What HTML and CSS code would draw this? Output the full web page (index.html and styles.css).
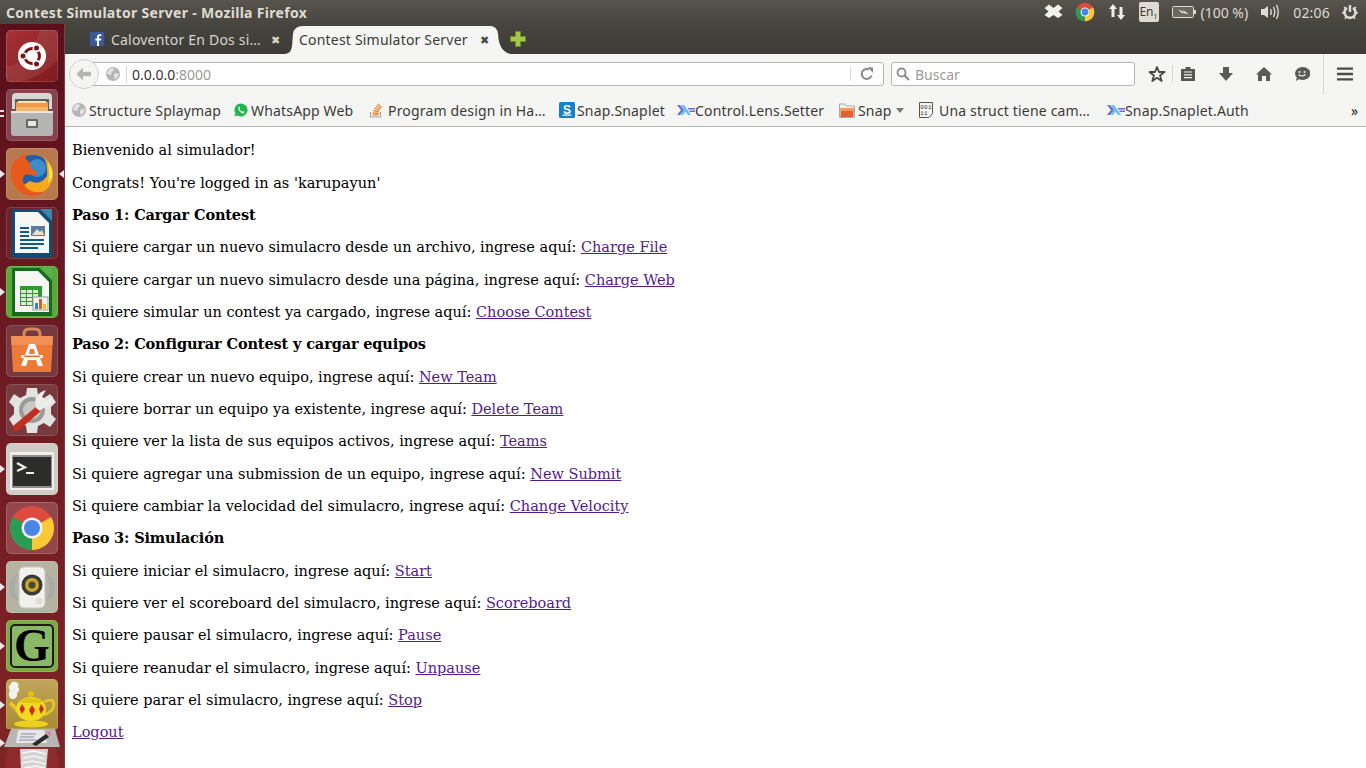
FILE: index.html
```html
<!DOCTYPE html>
<html>
<head>
<meta charset="utf-8" />
<title>Contest Simulator Server</title>
<link rel="stylesheet" href="styles.css">
</head>
<body>
<svg class="defs" width="0" height="0">
	<symbol id="chrome" viewBox="0 0 52 52">
		<circle cx="26" cy="26" r="22" fill="#dd4b3e"/>
		<path d="M26 26 L45.05 15 A22 22 0 0 1 26 48Z" fill="#fcc934"/>
		<path d="M26 26 L26 48 A22 22 0 0 1 6.95 15Z" fill="#2a9d55"/>
		<circle cx="26" cy="26" r="10.5" fill="#f4f4f4"/>
		<circle cx="26" cy="26" r="8" fill="#4a86e8"/>
	</symbol>
	<symbol id="globe" viewBox="0 0 16 16">
		<circle cx="8" cy="8" r="8" fill="#b5b5b5"/>
		<path d="M4 2 L8 1 L9 4 L6 6 L7 8 L4 9 L1 7Z M10 7 L15 7 L13 12 L10 14 L9 10Z" fill="#e4e4e4"/>
	</symbol>
	<symbol id="haskell" viewBox="0 0 18 12">
		<path d="M0 1H3L7 6L3 11H0L4 6Z" fill="#6f68d8"/>
		<path d="M4 1H7L14 11H11L8.5 7.5L6 11H3.5L7 6Z" fill="#5fc4e8"/>
		<path d="M11 4H18V5.5H11ZM12.5 6.5H18V8H12.5Z" fill="#6f68d8"/>
	</symbol>
</svg>

<header class="panel">
	<span class="panel-title">Contest Simulator Server - Mozilla Firefox</span>
	<div class="tray">
		<svg class="tray-dropbox" width="19" height="16" viewBox="0 0 19 16"><path d="M5 0.500L9.500 4L14 0.500L18.500 4L14.500 7.500L18.500 11L14 14L9.500 11L5 14L0.500 11L4.500 7.500L0.500 4Z" fill="#f2f1ed"/></svg>
		<svg class="tray-chrome" width="22" height="22"><use href="#chrome"/></svg>
		<svg class="tray-net" width="18" height="16" viewBox="0 0 18 16"><path d="M5 0L9 5H6.500V13H3.500V5H1ZM13 16L9 11H11.500V3H14.500V11H17Z" fill="#eeede8"/></svg>
		<span class="tray-lang">En<sub>1</sub></span>
		<svg class="tray-batt" width="24" height="12" viewBox="0 0 24 12"><rect x="0.500" y="0.500" width="21" height="11" rx="1" fill="#6a6960" stroke="#dfdbd2"/><rect x="22" y="4" width="2" height="4" fill="#dfdbd2"/><path d="M6 3.500L12 6L11 4L17 8.500L10 6.500L11 8Z" fill="#eeede8"/></svg>
		<span class="tray-pct">(100 %)</span>
		<svg class="tray-vol" width="21" height="16" viewBox="0 0 21 16"><path d="M1 5H4L8 2V14L4 11H1Z" fill="#dfdbd2"/><path d="M10.500 5Q12 8 10.500 11M13.500 3Q16 8 13.500 13M16.500 1Q20 8 16.500 15" fill="none" stroke="#dfdbd2" stroke-width="1.400"/></svg>
		<span class="tray-clock">02:06</span>
		<svg class="tray-power" width="16" height="16" viewBox="0 0 16 16"><path d="M5 3.800A5.500 5.500 0 1 0 11 3.800" fill="none" stroke="#dfdbd2" stroke-width="2.600"/><rect x="6.800" y="1" width="2.400" height="7" fill="#dfdbd2"/><path d="M2 3L3.500 4.500M14 3L12.500 4.500M0 9H2M16 9H14M3 15L4 13M13 15L12 13" stroke="#dfdbd2" stroke-width="1.500"/></svg>
	</div>
</header>

<div class="desktop">
	<nav class="launcher">
		<div class="tile tile-ubuntu">
			<svg width="52" height="52" viewBox="0 0 52 52">
				<path d="M0 36Q22 36 34 0H52V30Q30 52 6 52H0Z" fill="#fff" opacity=".08"/>
				<circle cx="26" cy="26" r="14" fill="#fff"/>
				<circle cx="26" cy="26" r="7.500" fill="none" stroke="#7d1416" stroke-width="3"/>
				<g fill="#fff"><circle cx="18" cy="26" r="3.500"/><circle cx="30" cy="19" r="3.500"/><circle cx="30" cy="33" r="3.500"/></g>
				<g fill="#7d1416"><circle cx="17" cy="26" r="2.500"/><circle cx="30.500" cy="18" r="2.500"/><circle cx="30.500" cy="34" r="2.500"/></g>
			</svg>
		</div>
		<div class="tile tile-files">
			<i class="pip pip-double"></i>
			<svg width="52" height="52" viewBox="0 0 52 52">
				<path d="M6 8Q6 4 10 4H42Q46 4 46 8V20H6Z" fill="#d8d6d2"/>
				<rect x="9" y="10" width="34" height="12" fill="#5d5d5d"/>
				<rect x="10" y="13" width="32" height="5" fill="#f19a4a"/>
				<rect x="12" y="12" width="28" height="2" fill="#fbe3b8"/>
				<rect x="10" y="18" width="32" height="5" fill="#f4b66c"/>
				<path d="M5 22H47V44Q47 47 44 47H8Q5 47 5 44Z" fill="#b4b4b2"/>
				<rect x="5" y="22" width="42" height="2" fill="#e8e8e6"/>
				<rect x="20" y="30" width="12" height="9" rx="1" fill="#666"/>
				<rect x="22" y="32" width="8" height="5" fill="#e6e6e6"/>
			</svg>
		</div>
		<div class="tile tile-firefox">
			<i class="pip"></i><i class="pip-right"></i>
			<svg width="52" height="52" viewBox="0 0 52 52">
				<circle cx="27" cy="25" r="18" fill="#1f5fa8"/>
				<circle cx="31" cy="20" r="9" fill="#3d8ccb"/>
				<path d="M38 9Q48 18 47 29Q44 44 29 47Q18 48 11 41L24 33Q34 38 41 28Q42 18 38 9Z" fill="#f6a81c"/>
				<path d="M42 14Q48 22 46 30L42 36Q44 24 42 14Z" fill="#fde34a"/>
				<path d="M20 6Q14 7 11 13L10 10Q4 18 5 28Q7 42 20 47Q31 50 39 43Q26 47 19 38Q14 30 20 26Q25 28 30 27Q33 24 28 22L24 20Q26 16 22 13Q18 11 20 6Z" fill="#e8591c"/>
			</svg>
		</div>
		<div class="tile tile-writer">
			<svg width="52" height="52" viewBox="0 0 52 52">
				<path d="M6 2H34L46 14V50H6Z" fill="#0e4f78"/>
				<path d="M34 2H46V14Z" fill="#3a86ad"/>
				<path d="M9 5H32L43 16V46H9Z" fill="#f6f6f4"/>
				<g fill="#0e5a88"><rect x="14" y="20" width="9" height="2"/><rect x="14" y="24" width="9" height="2"/><rect x="14" y="28" width="9" height="2"/><rect x="14" y="32" width="24" height="2"/><rect x="14" y="36" width="24" height="2"/><rect x="14" y="40" width="18" height="2"/></g>
				<rect x="25" y="19" width="14" height="10" fill="#5a7c9a"/>
				<path d="M26 28L31 22L34 25L36 23L38 28Z" fill="#e8e4cc"/>
			</svg>
		</div>
		<div class="tile tile-calc">
			<i class="pip"></i>
			<svg width="52" height="52" viewBox="0 0 52 52">
				<path d="M6 2H34L46 14V50H6Z" fill="#136b1b"/>
				<path d="M34 2H46V14Z" fill="#5cb04a"/>
				<path d="M9 5H32L43 16V46H9Z" fill="#f6f6f4"/>
				<rect x="14" y="20" width="22" height="20" fill="#2c9d2c"/>
				<g fill="#d8efd0"><rect x="15" y="24" width="5" height="3"/><rect x="21" y="24" width="5" height="3"/><rect x="27" y="24" width="5" height="3"/><rect x="15" y="28" width="5" height="3"/><rect x="21" y="28" width="5" height="3"/><rect x="27" y="28" width="5" height="3"/><rect x="15" y="32" width="5" height="3"/><rect x="21" y="32" width="5" height="3"/><rect x="27" y="32" width="5" height="3"/><rect x="15" y="36" width="5" height="3"/><rect x="21" y="36" width="5" height="3"/></g>
				<rect x="27" y="31" width="15" height="13" fill="#f2f2f2" stroke="#9a9a9a"/>
				<rect x="29" y="37" width="3" height="6" fill="#2a8bd0"/><rect x="33" y="33" width="3" height="10" fill="#e0592a"/><rect x="37" y="38" width="3" height="5" fill="#f0c020"/>
			</svg>
		</div>
		<div class="tile tile-software">
			<svg width="52" height="52" viewBox="0 0 52 52">
				<path d="M18 14V9Q18 4 23 4H29Q34 4 34 9V14" fill="none" stroke="#d98a5c" stroke-width="3"/>
				<path d="M5 11H47L45 47H7Z" fill="#ee7a38"/>
				<path d="M5 11H47L46.500 20H5.500Z" fill="#f29056"/>
				<path d="M23 19H29L37 41H32L30 35H22L20 41H15ZM24 24L23 29H29L28 24Z" fill="#fff"/>
				<rect x="15" y="30" width="22" height="3" fill="#fff"/>
				<rect x="18" y="30.500" width="16" height="1.500" fill="#e8703a"/>
			</svg>
		</div>
		<div class="tile tile-settings">
			<svg width="52" height="52" viewBox="0 0 52 52">
				<path d="M21 4H31L32 11L38 14L44 10L50 18L45 23V30L50 35L44 43L38 39L32 42L31 49H21L20 42L14 39L8 43L3 35L8 30V23L3 18L8 10L14 14L20 11Z" fill="#e2e2e0"/>
				<circle cx="26" cy="26" r="13" fill="#9a9a98"/>
				<circle cx="26" cy="26" r="9" fill="#c8c8c6"/>
				<path d="M7 42L31 22L35 27L12 47Q6 48 7 42Z" fill="#c22f22"/>
				<path d="M30 24Q27 13 35 8L40 6L36 13L40 17L47 12Q47 22 38 24Q35 25 34 27Z" fill="#ececea"/>
			</svg>
		</div>
		<div class="tile tile-terminal">
			<i class="pip"></i>
			<svg width="52" height="52" viewBox="0 0 52 52">
				<rect x="4" y="9" width="44" height="38" fill="#f0efec"/>
				<rect x="6" y="12" width="40" height="33" fill="#8f8f8b"/>
				<rect x="7" y="14" width="38" height="29" fill="#2c2c2a"/>
				<path d="M11 20L19 24.500L11 28" fill="none" stroke="#f2f2f2" stroke-width="2.200"/>
				<rect x="20" y="29" width="8" height="2" fill="#f2f2f2"/>
			</svg>
		</div>
		<div class="tile tile-chrome">
			<svg width="52" height="52"><use href="#chrome"/></svg>
		</div>
		<div class="tile tile-speaker">
			<i class="pip"></i>
			<svg width="52" height="52" viewBox="0 0 52 52">
				<path d="M11 13Q3 26 11 39M7 16Q1 26 7 36M41 13Q49 26 41 39M45 16Q51 26 45 36" fill="none" stroke="#9aa6ae" stroke-width="1.200"/>
				<rect x="13" y="6" width="26" height="41" rx="5" fill="#f1f0ec" stroke="#c8c7c2"/>
				<circle cx="26" cy="24" r="10.500" fill="#3c3a34"/>
				<circle cx="26" cy="24" r="7" fill="#c9a52a"/>
				<circle cx="26" cy="24" r="3.500" fill="#4a4636"/>
				<circle cx="33" cy="40" r="3.500" fill="#dddcd6"/>
			</svg>
		</div>
		<div class="tile tile-g">
			<i class="pip"></i>
			<div class="g-face">G</div>
		</div>
		<div class="tile tile-teapot">
			<i class="pip"></i>
			<svg width="52" height="50" viewBox="0 0 52 50">
				<path d="M5 20Q1 15 4 12Q1 7 5 5Q5 2 10 3Q14 5 12 8Q15 11 11 14Q12 18 8 20Z" fill="#f2f2ee"/>
				<path d="M4 24Q9 28 12 32" fill="none" stroke="#e8c820" stroke-width="4"/>
				<path d="M38 23Q47 18 48 25Q48 32 38 36" fill="none" stroke="#e8c820" stroke-width="2.500"/>
				<ellipse cx="25" cy="30" rx="15" ry="12" fill="#f2da20"/>
				<path d="M14 22Q25 16 36 22L34 24H16Z" fill="#e0c014"/>
				<circle cx="25" cy="15" r="3" fill="#e0c014"/>
				<ellipse cx="25" cy="45" rx="17" ry="3.500" fill="#ecd020"/>
				<g fill="#d42a1c"><path d="M16 25L19 30L16 35L13.500 30Z"/><path d="M26 26L29 31L26 37L23 31Z"/><path d="M35 25L38 30L35 35L33 30Z"/></g>
			</svg>
		</div>
		<div class="tile tile-scanner">
			<i class="pip"></i>
			<svg width="56" height="42" viewBox="0 0 56 42">
				<path d="M7 0H51L56 18H0Z" fill="#b9b5b2"/>
				<path d="M14 1H40L43 14H12Z" fill="#e6e6ea"/>
				<path d="M17 5H32M16 8H30M15 11H33" stroke="#8a8aa0"/>
				<path d="M28 15L42 5L45 8L32 17Z" fill="#2a2a2a"/>
				<path d="M42 4L47 2L46 7Z" fill="#d87ab0"/>
				<path d="M4 18H52L55 42H1Z" fill="#8f2a2e"/>
				<path d="M16 20H44L42 42H17Z" fill="#d6d4d2"/>
				<path d="M18 24L30 22L42 25M19 29L30 27L40 30M18 34L28 32L42 35M20 39L32 37L41 39" fill="none" stroke="#f6f6f6" stroke-width="1.500"/>
			</svg>
		</div>
	</nav>

	<div class="browser">
		<div class="tabstrip">
			<div class="tab">
				<svg class="fav" width="16" height="16" viewBox="0 0 16 16"><rect width="14" height="14" y="1" x="1" fill="#3b5998"/><path d="M10 15V9.500H12L12.300 7.500H10V6Q10 5 11 5H12.400V3.200H10.500Q8 3.200 8 6V7.500H6.300V9.500H8V15Z" fill="#fff"/></svg>
				<span class="tab-label">Caloventor En Dos si…</span>
				<span class="tab-close tab-close-dark">✖</span>
			</div>
			<div class="tab tab-active">
				<span class="tab-label">Contest Simulator Server</span>
				<span class="tab-close">✖</span>
			</div>
			<svg class="newtab" width="16" height="16" viewBox="0 0 16 16"><path d="M5.500 0.500H10.500V5.500H15.500V10.500H10.500V15.500H5.500V10.500H0.500V5.500H5.500Z" fill="#a3c94a" stroke="#6d8f2a"/></svg>
		</div>

		<div class="navbar">
			<div class="backbtn"><svg width="18" height="16" viewBox="0 0 18 16"><path d="M8 1.500L1.500 8L8 14.500V10.200H16V5.800H8Z" fill="#b6b6b4"/></svg></div>
			<div class="urlbar">
				<svg class="urlglobe" width="14" height="14"><use href="#globe"/></svg>
				<span class="urltext">0.0.0.0<span class="urlport">:8000</span></span>
				<svg class="reload" width="14" height="14" viewBox="0 0 14 14"><path d="M11.500 8.500A5 5 0 1 1 9 2.500" fill="none" stroke="#8a8a88" stroke-width="2"/><path d="M7.500 0L13 0.500V6Z" fill="#8a8a88"/></svg>
			</div>
			<div class="searchbar">
				<svg width="14" height="14" viewBox="0 0 14 14"><circle cx="5.500" cy="5.500" r="4" fill="none" stroke="#8a8a88" stroke-width="1.800"/><path d="M8.500 8.500L13 13" stroke="#8a8a88" stroke-width="2.200"/></svg>
				<span class="searchtext">Buscar</span>
			</div>
			<div class="navicons">
				<svg class="ni-star" width="18" height="18" viewBox="0 0 18 18"><path d="M9 2L11 7H16.500L12 10.500L13.700 16L9 12.800L4.300 16L6 10.500L1.500 7H7Z" fill="none" stroke="#4a4a48" stroke-width="1.800" stroke-linejoin="round"/></svg>
				<svg class="ni-clip" width="16" height="16" viewBox="0 0 16 16"><path d="M1 3H5.500V1H10.500V3H15V15H1Z" fill="#555"/><path d="M4 6H12M4 8.800H12M4 11.600H12" stroke="#f5f5f4" stroke-width="1.200"/></svg>
				<svg class="ni-down" width="16" height="16" viewBox="0 0 16 16"><path d="M5 1H11V7H15L8 15L1 7H5Z" fill="#5a5a58"/></svg>
				<svg class="ni-home" width="16" height="16" viewBox="0 0 16 16"><path d="M8 1L16 8.500H14V15H10V10H6V15H2V8.500H0Z" fill="#5a5a58"/></svg>
				<svg class="ni-chat" width="16" height="16" viewBox="0 0 16 16"><path d="M8 1A7.800 6.500 0 1 1 5 13.200L2 15L2.800 11.500A7.800 6.500 0 0 1 8 1Z" fill="#5a5a58"/><circle cx="5.500" cy="6" r="1" fill="#f5f5f4"/><circle cx="10.500" cy="6" r="1" fill="#f5f5f4"/><path d="M4.500 8.500Q8 11.500 11.500 8.500" fill="none" stroke="#f5f5f4" stroke-width="1.200"/></svg>
				<svg class="ni-menu" width="16" height="14" viewBox="0 0 16 14"><path d="M0 0.500H16V2.800H0ZM0 5.800H16V8.200H0ZM0 11.200H16V13.500H0Z" fill="#4a4a48"/></svg>
			</div>
		</div>

		<div class="bookmarks">
			<div class="bm"><svg width="14" height="14"><use href="#globe"/></svg><span>Structure Splaymap</span></div>
			<div class="bm"><svg width="14" height="14" viewBox="0 0 14 14"><path d="M7 0.500A6.500 6.500 0 1 1 3.700 12.600L0.500 13.500L1.400 10.300A6.500 6.500 0 0 1 7 0.500Z" fill="#1fb84c"/><path d="M4.800 3.500Q3.500 5 4.800 7.500Q6.500 10 9.500 10.500L10.500 9L8.800 8L8 8.700Q6.300 8 5.500 6L6.200 5.300L5.500 3.500Z" fill="#fff"/></svg><span>WhatsApp Web</span></div>
			<div class="bm bm-so"><svg width="14" height="16" viewBox="0 0 14 16"><path d="M1.500 10V15H11.500V10" fill="none" stroke="#a8a8a8" stroke-width="1.200"/><path d="M3.500 12.800H9.500M3.600 10.800L9.500 11.500M4.200 8.500L9.800 9.900M5.300 6L10.500 8.400M7 3.800L11.400 7M9 1.800L12.300 5.800" stroke="#f48024" stroke-width="1.300"/></svg><span>Program design in Ha…</span></div>
			<div class="bm bm-tight"><svg width="16" height="16" viewBox="0 0 16 16"><rect width="16" height="16" rx="1.500" fill="#1a80c4"/><text class="bm-s" x="8" y="12" text-anchor="middle">S</text><rect x="3.500" y="12.500" width="9" height="1.200" fill="#fff"/></svg><span>Snap.Snaplet</span></div>
			<div class="bm bm-flush"><svg width="18" height="12"><use href="#haskell"/></svg><span>Control.Lens.Setter</span></div>
			<div class="bm"><svg width="16" height="15" viewBox="0 0 16 15"><path d="M0.500 1H6L7.500 3H15.500V14.500H0.500Z" fill="#f4f2ee" stroke="#a8a8a4"/><rect x="1.500" y="5" width="13" height="9" fill="#e0622a"/><rect x="1.500" y="5" width="13" height="3" fill="#f09a5a"/></svg><span>Snap</span><i class="caret"></i></div>
			<div class="bm bm-bin"><svg width="16" height="16" viewBox="0 0 16 16"><path d="M1.500 0.500H14.500V11.500L11 15.500H1.500Z" fill="#f5f5f4" stroke="#555"/><text class="bm-bits" x="8" y="6.500" text-anchor="middle">001</text><text class="bm-bits" x="6" y="13" text-anchor="middle">11</text></svg><span>Una struct tiene cam…</span></div>
			<div class="bm bm-flush"><svg width="18" height="12"><use href="#haskell"/></svg><span>Snap.Snaplet.Auth</span></div>
			<span class="bm-more">»</span>
		</div>

		<main class="page">
			<p>Bienvenido al simulador!</p>
			<p>Congrats! You're logged in as 'karupayun'</p>
			<p><b>Paso 1: Cargar Contest</b></p>
			<p>Si quiere cargar un nuevo simulacro desde un archivo, ingrese aquí: <a href="#">Charge File</a></p>
			<p>Si quiere cargar un nuevo simulacro desde una página, ingrese aquí: <a href="#">Charge Web</a></p>
			<p>Si quiere simular un contest ya cargado, ingrese aquí: <a href="#">Choose Contest</a></p>
			<p><b>Paso 2: Configurar Contest y cargar equipos</b></p>
			<p>Si quiere crear un nuevo equipo, ingrese aquí: <a href="#">New Team</a></p>
			<p>Si quiere borrar un equipo ya existente, ingrese aquí: <a href="#">Delete Team</a></p>
			<p>Si quiere ver la lista de sus equipos activos, ingrese aquí: <a href="#">Teams</a></p>
			<p>Si quiere agregar una submission de un equipo, ingrese aquí: <a href="#">New Submit</a></p>
			<p>Si quiere cambiar la velocidad del simulacro, ingrese aquí: <a href="#">Change Velocity</a></p>
			<p><b>Paso 3: Simulación</b></p>
			<p>Si quiere iniciar el simulacro, ingrese aquí: <a href="#">Start</a></p>
			<p>Si quiere ver el scoreboard del simulacro, ingrese aquí: <a href="#">Scoreboard</a></p>
			<p>Si quiere pausar el simulacro, ingrese aquí: <a href="#">Pause</a></p>
			<p>Si quiere reanudar el simulacro, ingrese aquí: <a href="#">Unpause</a></p>
			<p>Si quiere parar el simulacro, ingrese aquí: <a href="#">Stop</a></p>
			<a href="#">Logout</a>
		</main>
	</div>
</div>
</body>
</html>
```

FILE: styles.css
```css
html, body {
	margin: 0;
	height: 768px;
	overflow: hidden;
}
body {
	font: normal 14px "Noto Sans", sans-serif;
	background: #fff;
}
.defs {
	display: block;
	height: 0;
}
svg {
	display: block;
	flex: none;
}

/* top panel */
.panel {
	height: 24px;
	display: flex;
	align-items: center;
	justify-content: space-between;
	background: linear-gradient(#56544c, #47453f);
	color: #dfdbd2;
}
.panel-title {
	margin-left: 6px;
	font-weight: bold;
	font-size: 14px;
	letter-spacing: .31px;
}
.tray {
	display: flex;
	align-items: center;
	margin-right: 8px;
	font-size: 14px;
}
.tray-dropbox { margin-right: 11px; }
.tray-chrome { margin-right: 12px; }
.tray-net { margin-right: 13px; }
.tray-lang {
	width: 20px;
	height: 20px;
	margin-right: 13px;
	background: #dfdbd2;
	color: #3c3b37;
	border-radius: 2px;
	font-size: 12px;
	line-height: 20px;
	text-align: center;
}
.tray-lang sub {
	font-size: 7px;
	line-height: 0;
}
.tray-pct { margin: 0 12px 0 5px; }
.tray-vol { margin-right: 12px; }
.tray-clock {
	margin-right: 12px;
	letter-spacing: .2px;
}

.desktop {
	display: flex;
	height: 744px;
}

/* launcher */
.launcher {
	width: 65px;
	flex: none;
	border-right: 1px solid #8a3a3e;
	overflow: hidden;
	padding: 6px 0 0 6px;
	box-sizing: border-box;
	display: flex;
	flex-direction: column;
	gap: 7px;
	background: linear-gradient(#5a0f1b, #6b1a22 40%, #7f2426);
}
.tile {
	width: 52px;
	height: 52px;
	flex: none;
	position: relative;
	border-radius: 5px;
	box-shadow: inset 0 0 0 1px rgba(255,255,255,.14);
}
.pip {
	position: absolute;
	left: -6px;
	top: 22px;
	border: 4px solid transparent;
	border-left: 5px solid #e8e8e8;
	border-right: 0;
}
.pip-double {
	top: 21px;
	width: 4px;
	height: 2px;
	border: 0;
	background: #e8e8e8;
	box-shadow: 0 5px 0 #e8e8e8;
}
.pip-right {
	position: absolute;
	right: -6px;
	top: 22px;
	border: 4px solid transparent;
	border-right: 5px solid #e8e8e8;
	border-left: 0;
}
.tile-ubuntu { background: linear-gradient(135deg, #a73236, #7e1a1c); }
.tile-files { background: #86434e; }
.tile-firefox { background: #b9794f; }
.tile-writer { background: #682530; }
.tile-calc { background: #5aa83c; }
.tile-software { background: #773840; }
.tile-settings { background: #763a3f; }
.tile-terminal { background: #cfccc5; }
.tile-chrome { background: #94474b; }
.tile-speaker { background: #b7b3a2; }
.tile-g {
	background: #7dab43;
	display: flex;
	align-items: center;
	justify-content: center;
}
.g-face {
	width: 44px;
	height: 44px;
	border: 2px solid #1c1c1c;
	border-radius: 5px;
	box-sizing: border-box;
	background: #8ab866;
	color: #000;
	font: bold 46px/40px "Liberation Serif", serif;
	text-align: center;
}
.tile-teapot {
	height: 50px;
	border-radius: 5px 5px 2px 2px;
	background: linear-gradient(#c0a55c, #a98c32);
}
.tile-scanner {
	margin: -7px 0 0 -2px;
	height: 42px;
	background: none;
	box-shadow: none;
}
.tile-scanner .pip { left: -4px; top: 10px; }

.browser {
	flex: 1;
	min-width: 0;
	display: flex;
	flex-direction: column;
}

/* tabs */
.tabstrip {
	height: 30px;
	display: flex;
	align-items: center;
	box-sizing: border-box;
	background: linear-gradient(#47453f, #3c3b37);
	color: #d8d5cd;
	font-size: 14px;
}
.tab {
	width: 218px;
	height: 30px;
	flex: none;
	box-sizing: border-box;
	display: flex;
	align-items: center;
	padding-left: 24px;
}
.fav { margin-right: 6px; }
.tab-label {
	flex: 1;
	white-space: nowrap;
	letter-spacing: .2px;
}
.tab-close {
	width: 10px;
	margin-right: 3px;
	font-size: 11px;
	text-align: center;
	color: #4a4a48;
}
.tab-close-dark { color: #d8d5cd; }
.tab-active {
	width: 228px;
	height: 28px;
	margin-top: 2px;
	padding: 0 0 2px 16px;
	background: #f5f5f4;
	clip-path: path("M0 28C6 28 8 26 9 20L10 8Q11 0 20 0L207 0Q214 0 215 8Q216 26 228 28Z");
	color: #3c3b37;
}
.tab-active .tab-close { margin-right: 22px; }
.newtab { margin-left: -1px; }

/* nav bar */
.navbar {
	height: 40px;
	display: flex;
	align-items: center;
	box-sizing: border-box;
	background: #f5f5f4;
	padding-left: 4px;
}
.backbtn {
	width: 30px;
	height: 30px;
	box-sizing: border-box;
	margin-right: -14px;
	border: 1px solid #cfcfcd;
	border-radius: 50%;
	background: #f5f5f4;
	display: flex;
	align-items: center;
	justify-content: center;
	position: relative;
}
.urlbar {
	width: 799px;
	height: 24px;
	box-sizing: border-box;
	display: flex;
	align-items: center;
	border: 1px solid #b5b5b3;
	border-radius: 0 3px 3px 0;
	background: #fff;
	padding-left: 20px;
	font-size: 14px;
}
.urlglobe { margin-right: 6px; }
.urltext {
	flex: 1;
	padding: 1px 0 0 5px;
	border-left: 1px solid #d5d5d3;
	line-height: 16px;
	color: #333;
}
.urlport { color: #9a9a98; }
.reload {
	box-sizing: content-box;
	padding-left: 9px;
	margin-right: 9px;
	border-left: 1px solid #d5d5d3;
}
.searchbar {
	width: 244px;
	height: 24px;
	margin-left: 7px;
	box-sizing: border-box;
	display: flex;
	align-items: center;
	border: 1px solid #b5b5b3;
	border-radius: 3px;
	background: #fff;
	padding-left: 4px;
	color: #9a9a98;
}
.searchtext { margin-left: 5px; }
.navicons {
	display: flex;
	align-items: center;
	margin-left: 13px;
}
.ni-star {
	box-sizing: content-box;
	padding-right: 6px;
	border-right: 1px solid #d5d5d3;
}
.ni-clip { margin-left: 7px; }
.ni-down { margin-left: 22px; }
.ni-home { margin-left: 22px; }
.ni-chat { margin-left: 22px; }
.ni-menu {
	box-sizing: content-box;
	margin-left: 13px;
	padding: 13px;
	border-left: 1px solid #d5d5d3;
}

/* bookmarks */
.bookmarks {
	height: 33px;
	box-sizing: border-box;
	display: grid;
	grid-template-columns: 162px 135px 190px 118px 162px 79px 189px 248px 1fr;
	align-items: center;
	padding-left: 7px;
	background: #f5f5f4;
	border-bottom: 1px solid #b5b5b3;
	color: #3c3b37;
	font-size: 14px;
	letter-spacing: .17px;
}
.bm {
	display: flex;
	align-items: center;
	gap: 3px;
	white-space: nowrap;
}
.bm-so { gap: 5px; }
.bm-bin { gap: 5px; }
.bm-tight { gap: 2px; }
.bm-flush { gap: 0; }
.bm-s {
	font: bold 12px "Liberation Sans", sans-serif;
	fill: #fff;
}
.bm-bits {
	font: 6px "Liberation Mono", monospace;
	fill: #333;
}
.caret {
	width: 0;
	border: 4px solid transparent;
	border-top: 5px solid #777;
	border-bottom: 0;
	margin-left: 2px;
}
.bm-more {
	margin-left: -4px;
	font-size: 14px;
	color: #222;
}

/* page */
.page {
	flex: 1;
	padding: 0 7px;
	font: 14.5px "DejaVu Serif", serif;
	color: #000;
	line-height: 18px;
	background: #fff;
}
.page p {
	margin: 14.330px 0;
}
.page b {
	letter-spacing: -.14px;
}
.page a {
	color: #551a8b;
}
```
